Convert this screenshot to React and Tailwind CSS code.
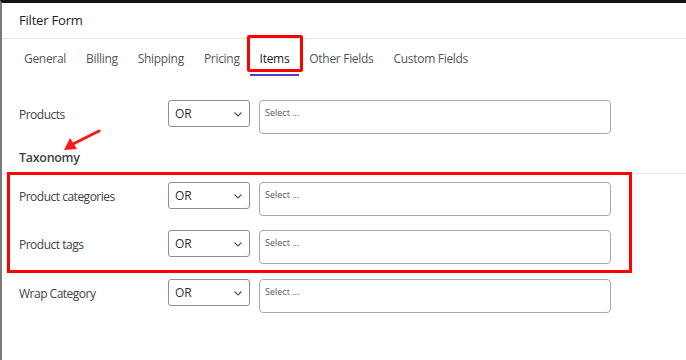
import React from "react";

const TABS = ["General", "Billing", "Shipping", "Pricing", "Items", "Other Fields", "Custom Fields"];

function FilterRow({ label, className = "" }) {
  return (
    <div className={`flex items-start ${className}`}>
      <div className="w-[149px] pt-[1px] leading-[27px] text-[12px] tracking-[-0.5px] text-[#3c434a]">{label}</div>
      <div className="w-[82px] h-[27px] border border-[#8c8f94] rounded-[3px] flex items-center justify-between pl-[6px] pr-[6px] text-[12px] text-[#2c3338]">
        <span>OR</span>
        <svg width="10" height="10" viewBox="0 0 10 10" fill="none">
          <path d="M1.5 3.5 L5 7 L8.5 3.5" stroke="#50575e" strokeWidth="1.2" />
        </svg>
      </div>
      <div className="ml-[9px] w-[352px] h-[34px] border border-[#a7aaad] rounded-[4px] pl-[5px] pt-[6px] text-[9px] leading-[12px] text-[#50575e]">
        Select ...
      </div>
    </div>
  );
}

export default function App() {
  return (
    <div
      className="relative w-[686px] h-[360px] overflow-hidden bg-white border-t-[3px] border-t-[#101317] border-l-[2px] border-l-[#7a7a7a]"
      style={{ fontFamily: "'Open Sans', 'Noto Sans', sans-serif" }}
    >
      <div className="h-[36px] flex items-center pl-[17px] border-b border-[#e2e4e7] text-[13px] tracking-[-0.2px] text-[#1d2327]">
        Filter Form
      </div>

      <div className="flex pl-[12px] h-[37px] items-stretch">
        {TABS.map((t) => (
          <div
            key={t}
            className={`flex items-center px-[10px] pt-[5px] border-b-[2px] text-[12px] tracking-[-0.3px] ${
              t === "Items" ? "text-[#1d2327] border-[#4b3fd6]" : "text-[#50575e] border-transparent"
            }`}
          >
            {t}
          </div>
        ))}
      </div>

      <FilterRow label="Products" className="mt-[24px] pl-[17px]" />

      <div className="mt-[14px] pl-[17px] pb-[5px] border-b border-[#e2e4e7] text-[12.5px] tracking-[-0.3px] leading-[20px] font-semibold text-[#3c434a]">
        Taxonomy
      </div>

      <FilterRow label="Product categories" className="mt-[8px] pl-[17px]" />
      <FilterRow label="Product tags" className="mt-[14px] pl-[17px]" />
      <FilterRow label="Wrap Category" className="mt-[15px] pl-[17px]" />

      {/* annotations */}
      <div className="absolute left-[245px] top-[32px] w-[56px] h-[37px] border-[3px] border-[#ff0000] rounded-[2px]" />
      <div className="absolute left-[5px] top-[169px] w-[625px] h-[101px] border-[3px] border-[#ff0000]" />
      <svg className="absolute left-[55px] top-[122px]" width="50" height="30" viewBox="0 0 50 30">
        <line x1="42" y1="6" x2="14" y2="20" stroke="#ff1a1a" strokeWidth="3" strokeLinecap="round" />
        <polygon points="7,25 13,13 20,24" fill="#ff1a1a" />
      </svg>
    </div>
  );
}
